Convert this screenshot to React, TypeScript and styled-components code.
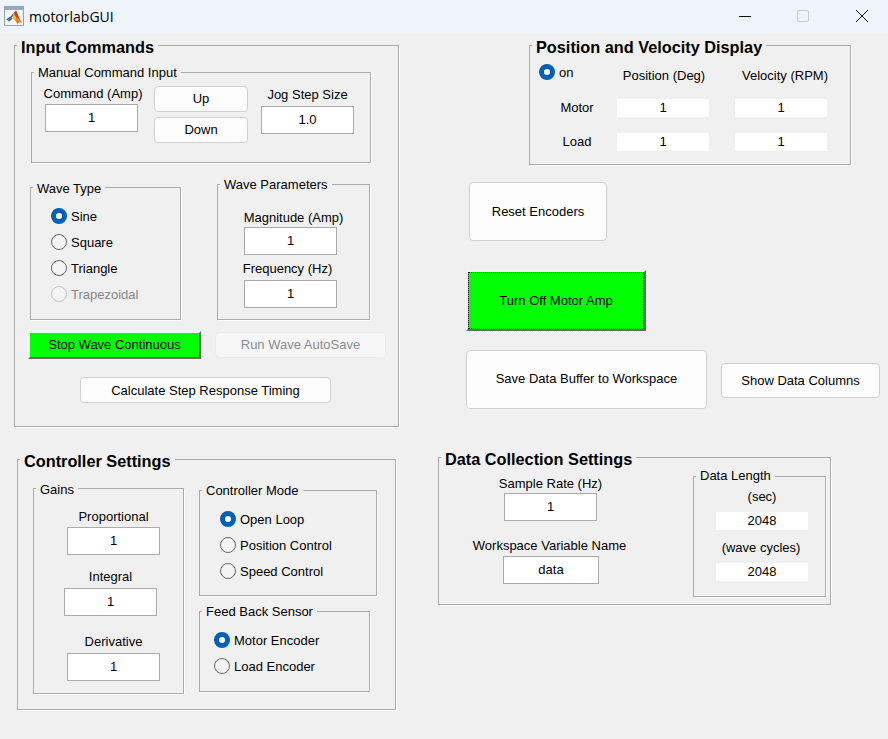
import React from "react";
import styled, { createGlobalStyle, css } from "styled-components";

const GlobalStyle = createGlobalStyle`
  html, body {
    margin: 0;
    padding: 0;
    background: #f0f0f0;
  }
  * {
    box-sizing: border-box;
  }
`;

const Window = styled.div`
  width: 888px;
  height: 739px;
  overflow: hidden;
  background: #f0f0f0;
  color: #000;
  font-family: "Liberation Sans", Arial, sans-serif;
  font-size: 13px;
`;

/* title bar */
const TitleBar = styled.div`
  height: 34px;
  display: flex;
  align-items: center;
  padding: 0 0 2px 4px;
  background: #eff4fa;
  font-family: "Open Sans", sans-serif;
  font-size: 14px;
`;

const TitleText = styled.span`
  margin-left: 5px;
`;

const WindowControls = styled.div`
  margin-left: auto;
  margin-right: -4px;
  display: flex;
  align-items: center;
`;

const WindowControl = styled.div`
  width: 58px;
  height: 32px;
  display: flex;
  align-items: center;
  justify-content: center;

  &:last-child {
    width: 60px;
  }
`;

const Workspace = styled.div`
  display: flex;
  align-items: flex-start;
`;

const LeftColumn = styled.div`
  width: 399px;
  padding: 11px 0 0 14px;
  display: flex;
  flex-direction: column;
  align-items: flex-start;
`;

const RightColumn = styled.div`
  flex: 1;
  padding-top: 11px;
  display: flex;
  flex-direction: column;
  align-items: flex-start;
`;

/* panels */
const Panel = styled.div<{ $w: number; $h: number; $ml?: number; $mt?: number }>`
  position: relative;
  flex: none;
  width: ${(p) => p.$w}px;
  height: ${(p) => p.$h}px;
  margin-left: ${(p) => p.$ml ?? 0}px;
  margin-top: ${(p) => p.$mt ?? 0}px;
  border: 1px solid #ababab;
  box-shadow: 1px 1px 0 #fff;
`;

const PanelTitle = styled.div<{ $big?: boolean; $top?: number }>`
  position: absolute;
  left: 2px;
  top: ${(p) => p.$top ?? (p.$big ? -9 : -8)}px;
  padding: 0 4px;
  background: #f0f0f0;
  line-height: ${(p) => (p.$big ? 20 : 16)}px;
  white-space: nowrap;
  ${(p) =>
    p.$big &&
    css`
      font-size: 16.3px;
      font-weight: 700;
    `}
`;

const Row = styled.div<{ $ml?: number; $mt?: number; $gap?: number; $align?: string }>`
  display: flex;
  align-items: ${(p) => p.$align ?? "flex-start"};
  margin-left: ${(p) => p.$ml ?? 0}px;
  margin-top: ${(p) => p.$mt ?? 0}px;
  gap: ${(p) => p.$gap ?? 0}px;
`;

/* label over a value box */
const Field = styled.div<{ $w?: number; $ml?: number; $mt?: number; $gap?: number }>`
  width: ${(p) => p.$w ?? 93}px;
  margin-left: ${(p) => p.$ml ?? 0}px;
  margin-top: ${(p) => p.$mt ?? 0}px;
  display: flex;
  flex-direction: column;
  align-items: center;
  gap: ${(p) => p.$gap ?? 3}px;
`;

const FieldLabel = styled.div<{ $nudge?: number }>`
  height: 16px;
  padding-top: 1px;
  margin-left: ${(p) => p.$nudge ?? 0}px;
  line-height: 16px;
  white-space: nowrap;
`;

const ValueBox = styled.div<{ $w?: number }>`
  flex: none;
  width: ${(p) => p.$w ?? 93}px;
  height: 28px;
  line-height: 26px;
  text-align: center;
  background: #fff;
  border: 1px solid #ababab;
`;

/* read-only display, no border */
const Readout = styled.div<{ $ml?: number }>`
  flex: none;
  width: 92px;
  height: 18px;
  margin-left: ${(p) => p.$ml ?? 0}px;
  line-height: 18px;
  text-align: center;
  background: #fff;
`;

const Buttons = styled.div`
  margin-left: 16px;
  margin-top: 13px;
  display: flex;
  flex-direction: column;
  gap: 5px;
`;

const PushButton = styled.button<{ $w: number; $h: number; $ml?: number; $mt?: number; $raise?: boolean }>`
  flex: none;
  width: ${(p) => p.$w}px;
  height: ${(p) => p.$h}px;
  margin: ${(p) => p.$mt ?? 0}px 0 0 ${(p) => p.$ml ?? 0}px;
  padding: 0 0 ${(p) => (p.$raise ? 2 : 0)}px;
  background: #fdfdfd;
  border: 1px solid #d0d0d0;
  border-radius: 4px;
  color: #000;
  font: inherit;

  &:disabled {
    background: #f6f6f6;
    border-color: #ececec;
    color: #8c8c8c;
  }
`;

const GreenButton = styled.button<{ $w: number; $h: number; $ml?: number; $mt?: number; $raise?: boolean }>`
  position: relative;
  flex: none;
  width: ${(p) => p.$w}px;
  height: ${(p) => p.$h}px;
  margin: ${(p) => p.$mt ?? 0}px 0 0 ${(p) => p.$ml ?? 0}px;
  padding: 0 0 ${(p) => (p.$raise ? 2 : 0)}px;
  background: #00ff00;
  border: 2px solid;
  border-color: #f4f4f4 #696969 #696969 #f4f4f4;
  color: #000;
  font: inherit;
`;

/* the dotted focus rectangle on the amp button */
const FocusRing = styled.span`
  position: absolute;
  inset: 0;
  border: 1px dotted #000;
`;

/* radio groups */
const RadioList = styled.div<{ $ml: number; $mt: number }>`
  margin: ${(p) => p.$mt}px 0 0 ${(p) => p.$ml}px;
  display: flex;
  flex-direction: column;
  gap: 10px;
`;

const RadioRow = styled.div<{ $off?: boolean }>`
  height: 16px;
  display: flex;
  align-items: flex-start;
  gap: 4px;
  white-space: nowrap;
  color: ${(p) => (p.$off ? "#858585" : "#000")};
`;

const RadioText = styled.span`
  padding-top: 1px;
  line-height: 16px;
`;

const RadioDot = styled.span<{ $on?: boolean; $off?: boolean }>`
  flex: none;
  width: 16px;
  height: 16px;
  border-radius: 50%;
  background: #f4f4f4;
  border: 1.5px solid ${(p) => (p.$off ? "#c6c6c6" : "#666")};
  ${(p) =>
    p.$on &&
    css`
      background: #fff;
      border: 5px solid #005fb8;
    `}
`;

const Radio = ({ label, on, off }: { label: string; on?: boolean; off?: boolean }) => (
  <RadioRow $off={off}>
    <RadioDot $on={on} $off={off} />
    <RadioText>{label}</RadioText>
  </RadioRow>
);

const OnCell = styled.div`
  width: 78px;
`;

const DisplayHeader = styled.div<{ $w: number; $ml?: number; $mt?: number }>`
  width: ${(p) => p.$w}px;
  margin-left: ${(p) => p.$ml ?? 0}px;
  margin-top: ${(p) => p.$mt ?? 0}px;
  text-align: center;
  line-height: 16px;
  white-space: nowrap;
`;

const MatlabIcon = () => (
  <svg width="20" height="20" viewBox="0 0 20 20">
    <rect x="0.5" y="0.5" width="19" height="19" fill="#f5f6f8" stroke="#9aa1a8" />
    <rect x="1" y="1" width="18" height="3" fill="#8eaccb" />
    <path d="M2 13.5 L7 10 L10 6.5 L8 13 L5.5 15.5 Z" fill="#2f73b4" />
    <path d="M7.5 12 L12 4.5 C13 6.5 15 12 18 17 C16 15.5 15 16 13.5 18.5 C12 15 10 12.5 7.5 12 Z" fill="#ec7d22" />
    <path d="M12 4.5 C13 6.5 14.5 10.5 15.5 13 L12 11 L10 6.5 Z" fill="#c8401a" />
    <path d="M7.5 12 L10 9 L12 11 L11.5 14 Z" fill="#f5c431" />
  </svg>
);

const App = () => {
  return (
    <Window>
      <GlobalStyle />
      <TitleBar>
        <MatlabIcon />
        <TitleText>motorlabGUI</TitleText>
        <WindowControls>
          <WindowControl>
            <svg width="12" height="12" viewBox="0 0 12 12">
              <path d="M0 6.5H12" stroke="#111" strokeWidth="1" />
            </svg>
          </WindowControl>
          <WindowControl>
            <svg width="12" height="12" viewBox="0 0 12 12">
              <rect x="0.5" y="0.5" width="11" height="11" rx="1.5" fill="none" stroke="#c9c9c9" />
            </svg>
          </WindowControl>
          <WindowControl>
            <svg width="14" height="14" viewBox="0 0 14 14">
              <path d="M1 1L13 13M13 1L1 13" stroke="#111" strokeWidth="1" />
            </svg>
          </WindowControl>
        </WindowControls>
      </TitleBar>

      <Workspace>
        <LeftColumn>
          <Panel $w={385} $h={382}>
            <PanelTitle $big>Input Commands</PanelTitle>

            <Panel $w={340} $h={91} $ml={16} $mt={26}>
              <PanelTitle>Manual Command Input</PanelTitle>
              <Row>
                <Field $ml={13} $mt={12}>
                  <FieldLabel $nudge={3}>Command (Amp)</FieldLabel>
                  <ValueBox>1</ValueBox>
                </Field>
                <Buttons>
                  <PushButton $w={94} $h={26} $raise>Up</PushButton>
                  <PushButton $w={94} $h={26} $raise>Down</PushButton>
                </Buttons>
                <Field $ml={13} $mt={13} $gap={4}>
                  <FieldLabel>Jog Step Size</FieldLabel>
                  <ValueBox>1.0</ValueBox>
                </Field>
              </Row>
            </Panel>

            <Row $ml={15} $mt={21} $gap={36} $align="flex-end">
              <Panel $w={151} $h={133}>
                <PanelTitle $top={-7}>Wave Type</PanelTitle>
                <RadioList $ml={20} $mt={20}>
                  <Radio label="Sine" on />
                  <Radio label="Square" />
                  <Radio label="Triangle" />
                  <Radio label="Trapezoidal" off />
                </RadioList>
              </Panel>
              <Panel $w={153} $h={136}>
                <PanelTitle>Wave Parameters</PanelTitle>
                <Field $ml={26} $mt={24} $gap={2}>
                  <FieldLabel $nudge={6}>Magnitude (Amp)</FieldLabel>
                  <ValueBox>1</ValueBox>
                </Field>
                <Field $ml={26} $mt={5} $gap={4}>
                  <FieldLabel $nudge={-6}>Frequency (Hz)</FieldLabel>
                  <ValueBox>1</ValueBox>
                </Field>
              </Panel>
            </Row>

            <Row $ml={13} $mt={11} $gap={14} $align="center">
              <GreenButton $w={173} $h={28} $raise>Stop Wave Continuous</GreenButton>
              <PushButton $w={171} $h={26} $raise disabled>Run Wave AutoSave</PushButton>
            </Row>
            <PushButton $w={251} $h={26} $ml={65} $mt={18}>Calculate Step Response Timing</PushButton>
          </Panel>

          <Panel $w={379} $h={251} $ml={3} $mt={32}>
            <PanelTitle $big>Controller Settings</PanelTitle>
            <Row $ml={15} $mt={28} $gap={15}>
              <Panel $w={151} $h={206}>
                <PanelTitle $top={-7}>Gains</PanelTitle>
                <Field $ml={33} $mt={19} $gap={3}>
                  <FieldLabel>Proportional</FieldLabel>
                  <ValueBox>1</ValueBox>
                </Field>
                <Field $ml={30} $mt={13} $gap={4}>
                  <FieldLabel>Integral</FieldLabel>
                  <ValueBox>1</ValueBox>
                </Field>
                <Field $ml={33} $mt={17} $gap={4}>
                  <FieldLabel>Derivative</FieldLabel>
                  <ValueBox>1</ValueBox>
                </Field>
              </Panel>
              <div>
                <Panel $w={178} $h={106} $mt={2}>
                  <PanelTitle>Controller Mode</PanelTitle>
                  <RadioList $ml={20} $mt={20}>
                    <Radio label="Open Loop" on />
                    <Radio label="Position Control" />
                    <Radio label="Speed Control" />
                  </RadioList>
                </Panel>
                <Panel $w={171} $h={81} $mt={15}>
                  <PanelTitle>Feed Back Sensor</PanelTitle>
                  <RadioList $ml={14} $mt={20}>
                    <Radio label="Motor Encoder" on />
                    <Radio label="Load Encoder" />
                  </RadioList>
                </Panel>
              </div>
            </Row>
          </Panel>
        </LeftColumn>

        <RightColumn>
          <Panel $w={322} $h={120} $ml={130}>
            <PanelTitle $big>Position and Velocity Display</PanelTitle>
            <Row $ml={9} $mt={18}>
              <OnCell>
                <Radio label="on" on />
              </OnCell>
              <DisplayHeader $w={92} $ml={1} $mt={4}>Position (Deg)</DisplayHeader>
              <DisplayHeader $w={92} $ml={29} $mt={4}>Velocity (RPM)</DisplayHeader>
            </Row>
            <Row $mt={15} $align="center">
              <DisplayHeader $w={48} $ml={23}>Motor</DisplayHeader>
              <Readout $ml={16}>1</Readout>
              <Readout $ml={26}>1</Readout>
            </Row>
            <Row $mt={16} $align="center">
              <DisplayHeader $w={48} $ml={23}>Load</DisplayHeader>
              <Readout $ml={16}>1</Readout>
              <Readout $ml={26}>1</Readout>
            </Row>
          </Panel>

          <PushButton $w={138} $h={59} $ml={70} $mt={17}>Reset Encoders</PushButton>
          <GreenButton $w={180} $h={61} $ml={67} $mt={29}>
            <FocusRing />
            Turn Off Motor Amp
          </GreenButton>
          <Row $ml={67} $mt={19} $gap={14} $align="center">
            <PushButton $w={241} $h={59} $raise>Save Data Buffer to Workspace</PushButton>
            <PushButton $w={159} $h={35} $mt={2}>Show Data Columns</PushButton>
          </Row>

          <Panel $w={393} $h={148} $ml={39} $mt={48}>
            <PanelTitle $big>Data Collection Settings</PanelTitle>
            <Row>
              <div>
                <Field $ml={65} $mt={17} $gap={2}>
                  <FieldLabel>Sample Rate (Hz)</FieldLabel>
                  <ValueBox>1</ValueBox>
                </Field>
                <Field $w={96} $ml={64} $mt={16} $gap={3}>
                  <FieldLabel $nudge={-3}>Workspace Variable Name</FieldLabel>
                  <ValueBox $w={96}>data</ValueBox>
                </Field>
              </div>
              <Panel $w={133} $h={121} $ml={94} $mt={18}>
                <PanelTitle $top={-9}>Data Length</PanelTitle>
                <Field $w={92} $ml={22} $mt={11} $gap={8}>
                  <FieldLabel>(sec)</FieldLabel>
                  <Readout>2048</Readout>
                </Field>
                <Field $w={92} $ml={22} $mt={9} $gap={8}>
                  <FieldLabel $nudge={-2}>(wave cycles)</FieldLabel>
                  <Readout>2048</Readout>
                </Field>
              </Panel>
            </Row>
          </Panel>
        </RightColumn>
      </Workspace>
    </Window>
  );
};

export default App;
